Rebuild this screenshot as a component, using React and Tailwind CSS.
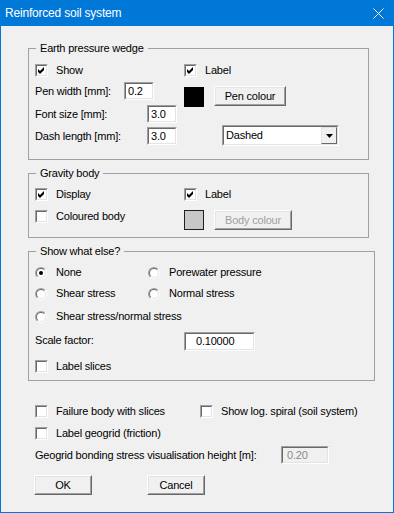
import React from 'react';

const txt = "text-[11px] leading-[13px] tracking-[-0.2px] font-['Liberation_Sans',Arial,sans-serif]";

function Box({ checked }) {
  return (
    <div className="w-[13px] h-[13px] shrink-0 border border-t-[#a0a0a0] border-l-[#a0a0a0] border-r-white border-b-white">
      <div className="w-full h-full bg-white border border-t-[#696969] border-l-[#696969] border-r-[#e3e3e3] border-b-[#e3e3e3] flex items-center justify-center">
        {checked && (
          <svg width="9" height="9" viewBox="0 0 9 9">
            <polygon points="1,3 3,5 7,1 7,4 3,8 1,6" fill="#000" />
          </svg>
        )}
      </div>
    </div>
  );
}

function Radio({ on }) {
  return (
    <div className="w-[12px] h-[12px] shrink-0 rounded-full border border-t-[#a0a0a0] border-l-[#a0a0a0] border-r-white border-b-white">
      <div className="w-full h-full rounded-full bg-white border border-t-[#696969] border-l-[#696969] border-r-[#e3e3e3] border-b-[#e3e3e3] flex items-center justify-center">
        {on && <div className="w-[4px] h-[4px] rounded-full bg-black" />}
      </div>
    </div>
  );
}

function CheckRow({ label, checked, className = '' }) {
  return (
    <div className={`flex items-center h-[15px] ${className}`}>
      <Box checked={checked} />
      <span className={`${txt} ml-[8px] whitespace-nowrap`}>{label}</span>
    </div>
  );
}

function RadioRow({ label, on, className = '' }) {
  return (
    <div className={`flex items-center h-[15px] ${className}`}>
      <Radio on={on} />
      <span className={`${txt} ml-[9px] whitespace-nowrap`}>{label}</span>
    </div>
  );
}

function Field({ value, className = '', inner = '', disabled }) {
  return (
    <div className={`shrink-0 border border-t-[#a0a0a0] border-l-[#a0a0a0] border-r-white border-b-white ${className}`}>
      <div className={`w-full h-full border border-t-[#696969] border-l-[#696969] border-r-[#e3e3e3] border-b-[#e3e3e3] flex items-center ${disabled ? 'bg-[#f0f0f0]' : 'bg-white'} ${inner}`}>
        <span className={`${txt} ${disabled ? 'text-[#8a8a8a]' : 'text-black'}`}>{value}</span>
      </div>
    </div>
  );
}

function Button({ children, className = '', disabled }) {
  return (
    <div className={`shrink-0 border border-t-white border-l-white border-r-[#696969] border-b-[#696969] ${className}`}>
      <div className="w-full h-full bg-[#f0f0f0] border border-t-[#e3e3e3] border-l-[#e3e3e3] border-r-[#a0a0a0] border-b-[#a0a0a0] flex items-center justify-center">
        <span className={`${txt} ${disabled ? 'text-[#a0a0a0]' : 'text-black'}`}>{children}</span>
      </div>
    </div>
  );
}

function Group({ title, className = '', children }) {
  return (
    <div className={`relative border border-[#a0a0a0] ${className}`}>
      <span className={`${txt} absolute left-[7px] top-[-7px] px-[4px] bg-[#f0f0f0] whitespace-nowrap`}>{title}</span>
      {children}
    </div>
  );
}

export default function App() {
  return (
    <div className="w-[394px] h-[513px] flex flex-col bg-[#f0f0f0] text-black overflow-hidden">
      <div className="h-[26px] bg-[#0078d7] flex items-center justify-between pl-[5px] pr-[10px] shrink-0">
        <span className="text-white text-[12px] tracking-[-0.2px] font-['Liberation_Sans',Arial,sans-serif]">Reinforced soil system</span>
        <svg width="11" height="11" viewBox="0 0 11 11">
          <path d="M0.5 0.5 L10.5 10.5 M10.5 0.5 L0.5 10.5" stroke="#fff" strokeWidth="1" />
        </svg>
      </div>

      <div className="flex-1 border-x border-b border-[#0078d7] pl-[27px]">
        {/* Earth pressure wedge */}
        <Group title="Earth pressure wedge" className="mt-[22px] w-[341px] h-[112px]">
          <div className="flex pt-[14px] pl-[6px]">
            <div className="w-[149px] flex flex-col">
              <CheckRow label="Show" checked />
              <div className="flex items-center h-[18px] mt-[4px]">
                <span className={`${txt} w-[89px]`}>Pen width [mm]:</span>
                <Field value="0.2" className="w-[30px] h-[18px]" inner="pl-[2px]" />
              </div>
              <div className="flex items-center h-[18px] mt-[5px]">
                <span className={`${txt} w-[112px]`}>Font size [mm]:</span>
                <Field value="3.0" className="w-[30px] h-[18px]" inner="pl-[2px]" />
              </div>
              <div className="flex items-center h-[18px] mt-[4px]">
                <span className={`${txt} w-[112px]`}>Dash length [mm]:</span>
                <Field value="3.0" className="w-[30px] h-[18px]" inner="pl-[2px]" />
              </div>
            </div>
            <div className="flex flex-col">
              <CheckRow label="Label" checked />
              <div className="flex items-start mt-[8px] h-[21px]">
                <div className="w-[20px] h-[20px] mt-[1px] bg-black" />
                <Button className="ml-[10px] w-[72px] h-[20px]">Pen colour</Button>
              </div>
              <div className="ml-[38px] mt-[18px] w-[117px] h-[21px] border border-t-[#a0a0a0] border-l-[#a0a0a0] border-r-white border-b-white">
                <div className="w-full h-full bg-white border border-t-[#696969] border-l-[#696969] border-r-[#e3e3e3] border-b-[#e3e3e3] flex items-center justify-between pl-[2px]">
                  <span className={txt}>Dashed</span>
                  <div className="w-[16px] h-[17px] border border-t-[#e3e3e3] border-l-[#e3e3e3] border-r-[#696969] border-b-[#696969] bg-[#f0f0f0] flex items-center justify-center">
                    <svg width="7" height="4" viewBox="0 0 7 4">
                      <polygon points="0,0 7,0 3.5,4" fill="#000" />
                    </svg>
                  </div>
                </div>
              </div>
            </div>
          </div>
        </Group>

        {/* Gravity body */}
        <Group title="Gravity body" className="mt-[13px] w-[341px] h-[65px]">
          <div className="flex flex-col pt-[13px] pl-[6px]">
            <div className="flex">
              <CheckRow label="Display" checked className="w-[149px]" />
              <CheckRow label="Label" checked />
            </div>
            <div className="flex items-start mt-[8px]">
              <div className="w-[149px] flex items-center h-[13px]">
                <Box />
                <span className={`${txt} ml-[8px]`}>Coloured body</span>
              </div>
              <div className="w-[20px] h-[20px] bg-[#c8c8c8] border border-[#202020]" />
              <Button className="ml-[10px] w-[78px] h-[20px]" disabled>Body colour</Button>
            </div>
          </div>
        </Group>

        {/* Show what else? */}
        <Group title="Show what else?" className="mt-[13px] w-[347px] h-[130px]">
          <div className="flex flex-col pt-[13px] pl-[6px]">
            <div className="flex">
              <RadioRow label="None" on className="w-[113px]" />
              <RadioRow label="Porewater pressure" />
            </div>
            <div className="flex mt-[6px]">
              <RadioRow label="Shear stress" className="w-[113px]" />
              <RadioRow label="Normal stress" />
            </div>
            <RadioRow label="Shear stress/normal stress" className="mt-[8px]" />
            <div className="flex items-center h-[19px] mt-[8px]">
              <span className={`${txt} w-[149px] pb-[3px]`}>Scale factor:</span>
              <Field value="0.10000" className="w-[71px] h-[19px]" inner="pl-[10px]" />
            </div>
            <CheckRow label="Label slices" className="mt-[8px]" />
          </div>
        </Group>

        {/* bottom options */}
        <div className="flex flex-col pl-[7px] mt-[23px]">
          <div className="flex">
            <CheckRow label="Failure body with slices" className="w-[165px]" />
            <CheckRow label="Show log. spiral (soil system)" />
          </div>
          <CheckRow label="Label geogrid (friction)" className="mt-[7px]" />
          <div className="flex items-center h-[18px] mt-[5px]">
            <span className={`${txt} w-[246px]`}>Geogrid bonding stress visualisation height [m]:</span>
            <Field value="0.20" disabled className="w-[48px] h-[18px]" inner="pl-[4px]" />
          </div>
          <div className="flex mt-[11px] ml-[-1px]">
            <Button className="w-[58px] h-[20px]">OK</Button>
            <Button className="ml-[55px] w-[58px] h-[20px]">Cancel</Button>
          </div>
        </div>
      </div>
    </div>
  );
}
